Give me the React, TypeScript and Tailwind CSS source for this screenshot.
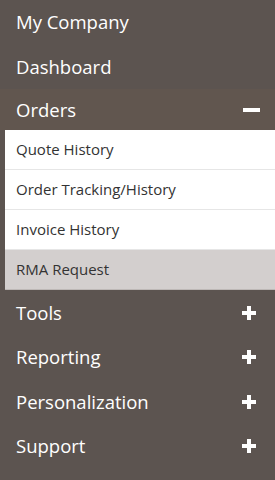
import React from "react";

const mainItems = ["Tools", "Reporting", "Personalization", "Support"];
const orderItems = ["Quote History", "Order Tracking/History", "Invoice History", "RMA Request"];

function Plus() {
  return (
    <svg width="14" height="14" viewBox="0 0 14 14">
      <rect x="5" y="0" width="4" height="14" fill="#fff" />
      <rect x="0" y="5" width="14" height="4" fill="#fff" />
    </svg>
  );
}

export default function App() {
  return (
    <div
      className="w-[275px] h-[480px] bg-[#5c5450] text-white overflow-hidden"
      style={{ fontFamily: '"Open Sans", "Noto Sans", sans-serif' }}
    >
      <div className="h-[44px] flex items-center pl-4 text-[18.5px]">My Company</div>
      <div className="h-[45px] flex items-center pl-4 text-[18.5px]">Dashboard</div>
      <div className="h-[41px] flex items-center justify-between pl-4 pr-[15px] bg-[#61564f] text-[18.5px]">
        <span>Orders</span>
        <span className="block w-[17px] h-[4px] bg-white" />
      </div>
      <div className="ml-[5px] bg-white text-[#333] text-[15px]">
        {orderItems.map((item, i) => (
          <div
            key={item}
            className={
              i === orderItems.length - 1
                ? "h-[40px] flex items-center pl-[11px] bg-[#d3cfce] border-b border-[#bdb8b6]"
                : "h-[40px] flex items-center pl-[11px] border-b border-[#e6e6e6]"
            }
          >
            {item}
          </div>
        ))}
      </div>
      {mainItems.map((item, i) => (
        <div
          key={item}
          className={
            (i % 2 === 0 ? "h-[45px]" : "h-[44px]") +
            " flex items-center justify-between pl-4 pr-[19px] text-[18.5px]"
          }
        >
          <span>{item}</span>
          <Plus />
        </div>
      ))}
    </div>
  );
}
